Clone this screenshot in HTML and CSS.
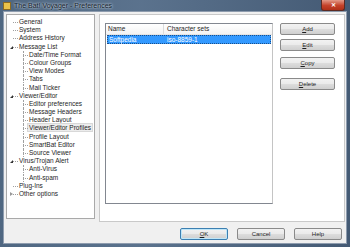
FILE: index.html
```html
<!DOCTYPE html>
<html>
<head>
<meta http-equiv="Content-Type" content="text/html;charset=UTF-8">
<link rel="stylesheet" href="styles.css">
</head>
<body>
<div class="window">
  <div class="titleBar">
    <span class="appIcon"></span>
    <span class="titleText">The Bat! Voyager - Preferences</span>
    <span class="closeBtn">&#x2715;</span>
  </div>
  <div class="client">
    <div class="mainRow">
      <div class="tree">
        <div class="node lvl1">General</div>
        <div class="node lvl1">System</div>
        <div class="node lvl1">Address History</div>
        <div class="node lvl1 open">Message List</div>
        <div class="node lvl2">Date/Time Format</div>
        <div class="node lvl2">Colour Groups</div>
        <div class="node lvl2">View Modes</div>
        <div class="node lvl2">Tabs</div>
        <div class="node lvl2">Mail Ticker</div>
        <div class="node lvl1 open">Viewer/Editor</div>
        <div class="node lvl2">Editor preferences</div>
        <div class="node lvl2">Message Headers</div>
        <div class="node lvl2">Header Layout</div>
        <div class="node lvl2"><span class="selItem">Viewer/Editor Profiles</span></div>
        <div class="node lvl2">Profile Layout</div>
        <div class="node lvl2">SmartBat Editor</div>
        <div class="node lvl2">Source Viewer</div>
        <div class="node lvl1 open">Virus/Trojan Alert</div>
        <div class="node lvl2">Anti-Virus</div>
        <div class="node lvl2">Anti-spam</div>
        <div class="node lvl1">Plug-Ins</div>
        <div class="node lvl1 closed">Other options</div>
      </div>
      <div class="page">
        <div class="listBox">
          <div class="listHead">
            <span class="colName">Name</span>
            <span class="colSets">Character sets</span>
          </div>
          <div class="listRow selected">
            <span class="colName">Softpedia</span>
            <span class="colSets">iso-8859-1</span>
          </div>
        </div>
        <div class="sideButtons">
          <div class="btn"><u>A</u>dd</div>
          <div class="btn"><u>E</u>dit</div>
          <div class="btn gapTop"><u>C</u>opy</div>
          <div class="btn gapTopBig"><u>D</u>elete</div>
        </div>
      </div>
    </div>
    <div class="bottomRow">
      <div class="btn wide default"><u>O</u>K</div>
      <div class="btn wide">Cancel</div>
      <div class="btn wide">Help</div>
    </div>
  </div>
</div>
</body>
</html>
```

FILE: styles.css
```css
html, body{
  margin: 0;
  padding: 0;
}
body{
  width: 350px;
  height: 247px;
  overflow: hidden;
  font-family: "Liberation Sans", Arial, sans-serif;
  font-size: 6.5px;
  color: #1e1e1e;
}
.window{
  width: 350px;
  height: 247px;
  display: flex;
  flex-direction: column;
  background: linear-gradient(90deg, #4f6781 0%, #62799472 40%, #445a74 100%), #556d88;
  padding: 0 3px 3px 3px;
  box-sizing: border-box;
}
.titleBar{
  height: 11px;
  display: flex;
  align-items: center;
  gap: 3px;
  font-size: 7px;
}
.appIcon{
  width: 6px;
  height: 6px;
  background: #e9c24a;
  border: 1px solid #8c6a20;
}
.titleText{
  flex: 1;
  color: #13202c;
  text-shadow: 0 0 3px #c8d4e0, 0 0 2px #c8d4e0;
}
.closeBtn{
  width: 22px;
  height: 10px;
  margin-top: -1px;
  background: linear-gradient(#e29a88, #c4422a 55%, #b03018);
  border: 1px solid #5c2a22;
  border-top: none;
  border-radius: 0 0 3px 3px;
  color: #fff;
  font-size: 6px;
  font-weight: bold;
  text-align: center;
  line-height: 10px;
  margin-right: 2px;
}
.client{
  flex: 1;
  background: #f0f0f0;
  border: 1px solid #8e9cae;
  display: flex;
  flex-direction: column;
  padding: 2px 1px 0 2px;
}
.mainRow{
  display: flex;
  gap: 4px;
}
.tree{
  width: 89px;
  height: 205px;
  background: #fff;
  border: 1px solid #a9a9a9;
  padding-top: 3px;
  box-sizing: border-box;
}
.node{
  height: 8.2px;
  line-height: 8.2px;
  white-space: nowrap;
  position: relative;
}
.lvl1{
  padding-left: 12px;
}
.lvl2{
  padding-left: 22px;
}
.lvl1::before{
  content: "";
  position: absolute;
  left: 6px;
  top: 4px;
  width: 5px;
  border-top: 1px dotted #a0a0a0;
}
.lvl2::before{
  content: "";
  position: absolute;
  left: 16px;
  top: 4px;
  width: 5px;
  border-top: 1px dotted #a0a0a0;
}
.lvl2::after{
  content: "";
  position: absolute;
  left: 16px;
  top: 0;
  height: 8px;
  border-left: 1px dotted #a0a0a0;
}
.open::after{
  content: "";
  position: absolute;
  left: 3px;
  top: 3px;
  border-left: 3px solid transparent;
  border-bottom: 3px solid #333;
}
.closed::after{
  content: "";
  position: absolute;
  left: 3px;
  top: 2px;
  border-left: 3px solid #999;
  border-top: 2px solid transparent;
  border-bottom: 2px solid transparent;
}
.selItem{
  background: #ececec;
  border: 1px solid #d8d8d8;
  padding: 0 1px;
  margin-left: -2px;
}
.page{
  flex: 1;
  height: 208px;
  background: #fff;
  border: 1px solid #c9c9c9;
  display: flex;
  padding: 8px 0 0 5px;
  box-sizing: border-box;
}
.listBox{
  width: 168px;
  height: 181px;
  border: 1px solid #828790;
  border-right-color: #c4c4c4;
  box-sizing: border-box;
}
.listHead{
  height: 10px;
  line-height: 10px;
  display: flex;
  border-bottom: 1px solid #e4e4e4;
  background: linear-gradient(#fff, #f3f3f3);
}
.listHead .colName{
  border-right: 1px solid #dcdcdc;
}
.colName{
  width: 55px;
  padding-left: 2px;
}
.colSets{
  padding-left: 3px;
}
.listRow{
  height: 9px;
  line-height: 9px;
  display: flex;
  margin: 0 1px;
}
.selected{
  background: #3399ff;
  color: #fff;
  outline: 1px dotted #1a4f8a;
  outline-offset: -1px;
}
.sideButtons{
  display: flex;
  flex-direction: column;
  margin-left: 7px;
  gap: 4px;
}
.btn{
  width: 55px;
  height: 12px;
  line-height: 11px;
  box-sizing: border-box;
  border: 1px solid #8a8a8a;
  border-radius: 2px;
  background: linear-gradient(#f2f2f2 0%, #ebebeb 45%, #dcdcdc 55%, #cfcfcf 100%);
  text-align: center;
  font-size: 6px;
}
.gapTop{
  margin-top: 2px;
}
.gapTopBig{
  margin-top: 5px;
}
.bottomRow{
  display: flex;
  justify-content: flex-end;
  gap: 9px;
  padding: 6px 3px 0 0;
}
.wide{
  width: 48px;
  height: 12px;
}
.default{
  border-color: #3c7fb1;
  box-shadow: inset 0 0 0 1px #bfe6f8;
}
```
